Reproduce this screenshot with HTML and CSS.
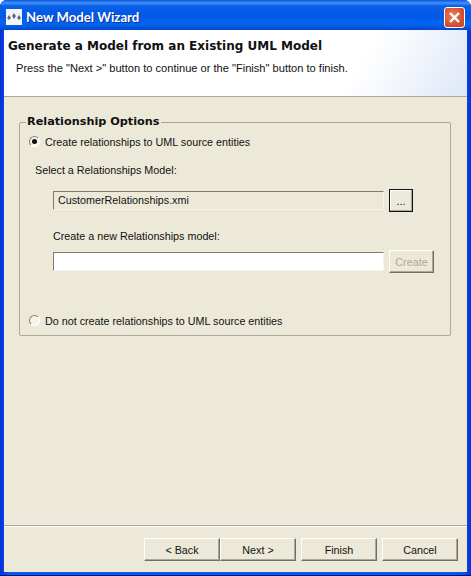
FILE: index.html
```html
<html lang="en">

<head>
    <meta charset="UTF-8">
    <title>New Model Wizard</title>
    <link rel="stylesheet" href="styles.css">
</head>

<body>
    <div class="window">
        <header class="titlebar">
            <svg class="app-icon" width="16" height="16" viewBox="0 0 16 16">
                <rect width="16" height="16" fill="#f4f4fa" />
                <path d="M1 9l2-3 2 3-2 2zM6 7l2-3 2 3-2 3zM11 9l2-3 2 3-2 2z" fill="#5a6a8c" />
            </svg>
            <div class="title">New Model Wizard</div>
            <div class="close">
                <svg width="21" height="21" viewBox="0 0 21 21">
                    <path d="M6 6l9 9M15 6l-9 9" stroke="#fff" stroke-width="2.4" />
                </svg>
            </div>
        </header>
        <div class="content">
            <div class="banner">
                <h1>Generate a Model from an Existing UML Model</h1>
                <p>Press the "Next &gt;" button to continue or the "Finish" button to finish.</p>
            </div>
            <main>
                <fieldset class="group">
                    <legend>Relationship Options</legend>
                    <label class="radio-row">
                        <span class="radio checked"></span>
                        Create relationships to UML source entities
                    </label>
                    <div class="select-label">Select a Relationships Model:</div>
                    <div class="field-row first">
                        <div class="input readonly">CustomerRelationships.xmi</div>
                        <button class="btn browse" type="button">...</button>
                    </div>
                    <div class="new-label">Create a new Relationships model:</div>
                    <div class="field-row">
                        <div class="input"></div>
                        <button class="btn create" type="button" disabled>Create</button>
                    </div>
                    <label class="radio-row last">
                        <span class="radio"></span>
                        Do not create relationships to UML source entities
                    </label>
                </fieldset>
            </main>
            <footer>
                <button class="btn nav" type="button">&lt; Back</button>
                <button class="btn nav" type="button">Next &gt;</button>
                <button class="btn nav gap" type="button">Finish</button>
                <button class="btn nav gap" type="button">Cancel</button>
            </footer>
        </div>
    </div>
</body>

</html>
```

FILE: styles.css
```css
* {
    box-sizing: border-box;
    margin: 0;
    padding: 0;
}

html,
body {
    height: 100%;
}

body {
    font-family: "Liberation Sans", sans-serif;
    font-size: 10.75px;
    color: #111;
}

.window {
    height: 576px;
    display: flex;
    flex-direction: column;
    background: linear-gradient(to right, #0831d9, #0a5ae8 2%, #0a5ae8 98%, #0831d9);
    padding: 0 4px 4px 4px;
    border-radius: 7px 7px 0 0;
    box-shadow: inset 0 -1px 0 #00138c, inset 1px 0 0 #0831d9;
}

.titlebar {
    height: 30px;
    margin: 0 -4px;
    padding: 4px 6px 0 6px;
    display: flex;
    align-items: center;
    border-radius: 7px 7px 0 0;
    background: linear-gradient(to bottom, #0a54e0 0, #3f94f6 3px, #0a5fe8 6px, #0058e6 16px, #0466f0 24px, #0048d0 30px);
}

.title {
    flex: 1;
    margin-left: 4px;
    font-family: "Lato", sans-serif;
    font-size: 13.2px;
    font-weight: bold;
    color: white;
    text-shadow: 1px 1px 0 #0a2f9c;
}

.close {
    width: 21px;
    height: 21px;
    border: 1px solid #fff;
    border-radius: 3px;
    background: radial-gradient(circle at 40% 40%, #e8815e, #d2492a 70%);
    display: grid;
    place-items: center;
}

.close svg {
    margin: -1px;
}

.content {
    flex: 1;
    display: flex;
    flex-direction: column;
    background: #ece9d8;
}

.banner {
    height: 67px;
    padding: 8px 4px 0;
    background: linear-gradient(120deg, white 75%, #dfe7f6 100%);
    border-bottom: 1px solid #aca899;
}

.banner h1 {
    font-family: "DejaVu Sans", sans-serif;
    font-size: 12px;
    font-weight: bold;
    line-height: 16px;
}

.banner p {
    margin-top: 7px;
    padding-left: 8px;
    font-size: 11.1px;
    line-height: 15px;
}

main {
    flex: 1;
    padding: 17px 16px 0 15px;
}

.group {
    height: 222px;
    border: 1px solid #aca899;
    border-radius: 2px;
    padding: 0 0 0 9px;
}

.group legend {
    margin-left: -3px;
    padding: 0 1px;
    font-family: "DejaVu Sans", sans-serif;
    font-size: 11.25px;
    font-weight: bold;
    line-height: 16px;
}

.radio-row {
    display: flex;
    align-items: center;
    gap: 5px;
    height: 16px;
    margin-top: 4px;
}

.radio-row.last {
    margin-top: 40px;
}

.radio {
    width: 11px;
    height: 11px;
    margin-bottom: 2px;
    border-radius: 50%;
    border: 1px solid;
    border-color: #85836f #fff #fff #85836f;
    background: #f4f3ea;
    display: grid;
    place-items: center;
}

.radio.checked::after {
    content: "";
    width: 5px;
    height: 5px;
    border-radius: 50%;
    background: #111;
}

.select-label {
    margin: 13px 0 0 6px;
    line-height: 15px;
}

.new-label {
    margin: 17px 0 0 24px;
    line-height: 15px;
}

.field-row {
    display: flex;
    align-items: center;
    gap: 5px;
    margin: 6px 0 0 24px;
    height: 23px;
}

.field-row.first {
    margin-top: 11px;
}

.input {
    width: 331px;
    height: 19px;
    padding: 1px 4px;
    background: white;
    border: 1px solid;
    border-color: #7e7b6c #f6f4ea #f6f4ea #7e7b6c;
    line-height: 15px;
}

.input.readonly {
    background: #ece9d8;
}

.btn {
    font-family: "Liberation Sans", sans-serif;
    font-size: 10.75px;
    color: #111;
    background: #ece9d8;
    border: 1px solid;
    border-color: #fff #716f64 #716f64 #fff;
    box-shadow: inset -1px -1px 0 #aca899;
}

.browse {
    width: 24px;
    height: 23px;
    border: 1px solid #111;
    box-shadow: inset -1px -1px 0 #aca899, inset 1px 1px 0 #fff;
}

.create {
    width: 45px;
    height: 23px;
    color: #aca899;
}

footer {
    height: 47px;
    border-top: 1px solid #aca899;
    padding: 12px 9px 0 140px;
    display: flex;
    align-items: flex-start;
    box-shadow: inset 0 1px 0 #fff;
}

.nav {
    width: 76px;
    height: 23px;
}

.nav.gap {
    margin-left: 5px;
}
```
